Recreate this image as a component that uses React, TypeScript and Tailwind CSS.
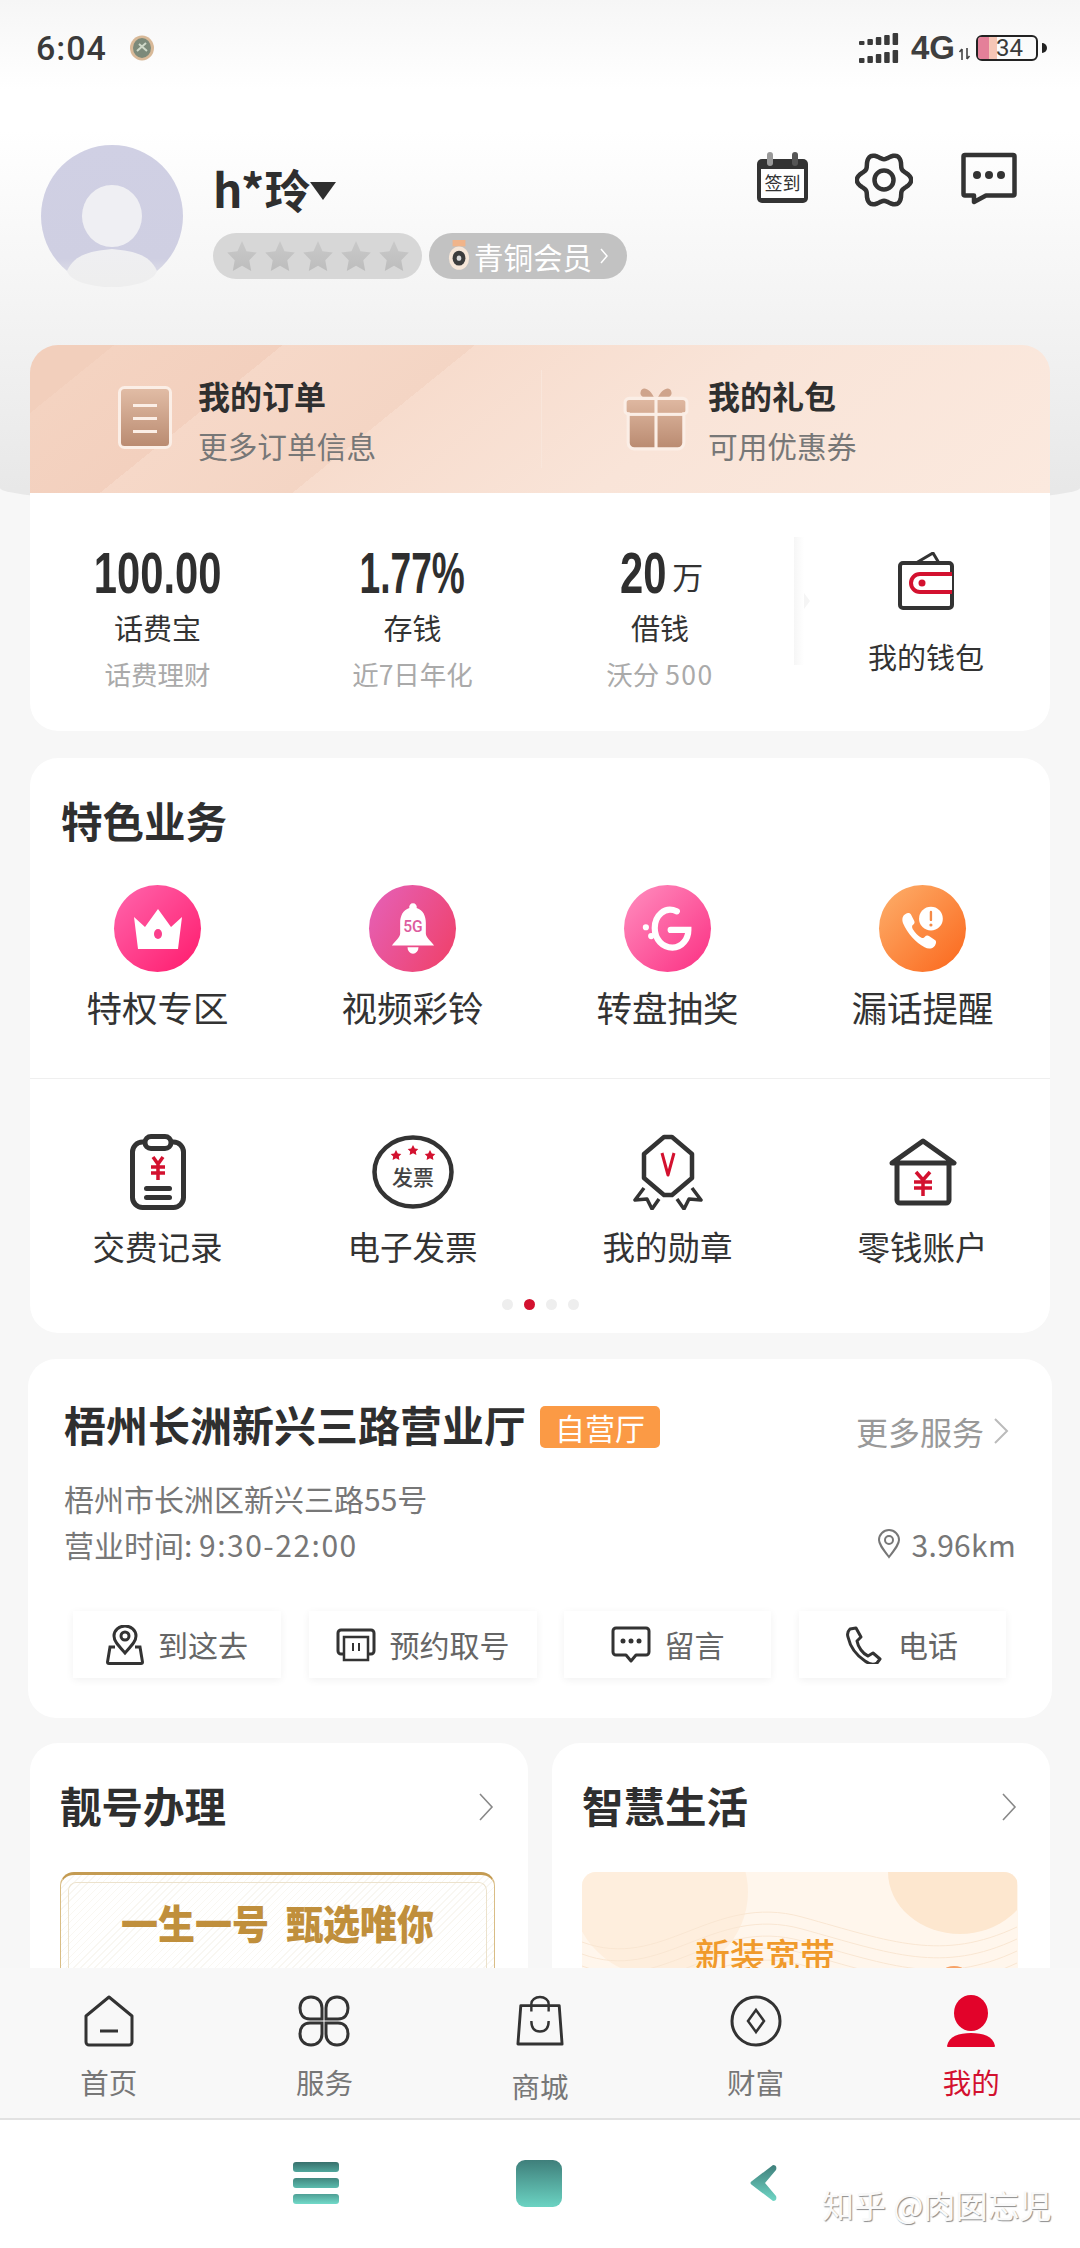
import React from "react";

const gearPath = (() => {
  const pts: string[] = [];
  for (let i = 0; i < 120; i++) {
    const t = (i / 120) * Math.PI * 2;
    const r = 24 + 3.2 * Math.cos(6 * t);
    pts.push(`${(29 + r * Math.cos(t)).toFixed(1)} ${(28 + r * Math.sin(t)).toFixed(1)}`);
  }
  return "M" + pts.join("L") + "Z";
})();

function Signal() {
  const bars = [0, 1, 2, 3, 4];
  return (
    <svg width="40" height="30" viewBox="0 0 40 30" fill="#3a3a3a">
      {bars.map((b) => (
        <g key={b}>
          <rect x={b * 8.4} y={8 - b * 2} width="5.5" height={4 + b * 2} rx="1" />
          <rect x={b * 8.4} y={25 - b * 2} width="5.5" height={5 + b * 2} rx="1" />
        </g>
      ))}
    </svg>
  );
}

function StatusBar() {
  return (
    <div className="h-[95px] pl-[36px] pr-[33px] flex items-center justify-between">
      <div className="flex items-center">
        <span className="text-[34px] leading-[40px] font-medium text-[#3a3a3a] font-['Roboto',sans-serif] tracking-[1px]">6:04</span>
        <svg className="ml-[22px]" width="26" height="26" viewBox="0 0 26 26">
          <ellipse cx="13" cy="13" rx="12" ry="12.500" fill="#d8b998" />
          <ellipse cx="13" cy="13" rx="9" ry="10" fill="#7c8a7a" />
          <path d="M8 16 L17 8 M10 9 L18 16" stroke="#cfd8c8" strokeWidth="2" />
        </svg>
      </div>
      <div className="flex items-center">
        <Signal />
        <span className="ml-[12px] text-[33px] leading-[36px] font-bold text-[#3f3f3f] font-['Liberation_Sans',sans-serif]">4G</span>
        <svg className="ml-[3px] mt-[13px]" width="13" height="14" viewBox="0 0 13 14" stroke="#444" strokeWidth="1.6" fill="none">
          <path d="M4 13V2M1.5 5L4 2M9 1v11M9 12l2.5-3" />
        </svg>
        <div className="ml-[5px] w-[62px] h-[26px] rounded-[6px] border-2 border-[#222] flex items-center">
          <div className="w-[11px] h-full rounded-l-[3px] bg-[#e48099]" />
          <div className="w-[8px] h-full bg-[#f6c6b6]" />
          <span className="ml-[-1px] text-[24px] leading-[22px] text-[#3a3a3a] font-['Roboto',sans-serif]">34</span>
        </div>
        <div className="ml-[4px] w-[5px] h-[10px] rounded-r-full bg-[#222]" />
      </div>
    </div>
  );
}

function Avatar() {
  return (
    <svg width="142" height="142" viewBox="0 0 142 142" className="shrink-0">
      <defs>
        <linearGradient id="avFade" x1="0" y1="0" x2="0" y2="1">
          <stop offset="0" stopColor="#efeff2" />
          <stop offset="1" stopColor="#eeeeee" />
        </linearGradient>
        <linearGradient id="avRing" x1="0" y1="0" x2="0" y2="1">
          <stop offset="0" stopColor="#d0d0e4" />
          <stop offset="0.8" stopColor="#cfcfe2" />
          <stop offset="1" stopColor="#e8e8ec" />
        </linearGradient>
      </defs>
      <circle cx="71" cy="71" r="71" fill="url(#avRing)" />
      <ellipse cx="71" cy="71" rx="30" ry="31" fill="#efeff3" />
      <path d="M26 126 C34 108 52 106 71 104 C90 106 108 108 116 126 C112 138 88 142 71 142 C54 142 30 138 26 126Z" fill="url(#avFade)" />
    </svg>
  );
}

function Star() {
  return (
    <svg width="30" height="30" viewBox="0 0 28 26" preserveAspectRatio="none">
      <defs>
        <linearGradient id="starG" x1="0" y1="0" x2="0" y2="1">
          <stop offset="0" stopColor="#c9c9c9" />
          <stop offset="1" stopColor="#bdbdbd" />
        </linearGradient>
      </defs>
      <path d="M14 0l4.2 8.8 9.6 1.2-7 6.6 1.8 9.4L14 21.4 5.400 26l1.800-9.400-7-6.600 9.600-1.200z" fill="url(#starG)" />
    </svg>
  );
}

function Profile() {
  return (
    <div className="pl-[41px] pr-[63px] pt-[50px] flex justify-between">
      <div className="flex">
        <Avatar />
        <div className="ml-[30px]">
          <div className="mt-[17px] h-[52px] flex items-center text-[46px] leading-[52px] font-bold text-[#2f2f2f]">
            <span>h*玲</span>
            <svg className="mt-[6px]" width="26" height="18" viewBox="0 0 26 18" fill="#2f2f2f"><path d="M0 0h26L13 18z" /></svg>
          </div>
          <div className="mt-[19px] flex gap-[7px]">
            <div className="w-[209px] h-[46px] rounded-full bg-[#d7d7d7] flex items-center justify-center gap-[8px]">
              {[0, 1, 2, 3, 4].map((s) => <Star key={s} />)}
            </div>
            <div className="w-[198px] h-[46px] rounded-full bg-[#c2c2c2] flex items-center pl-[19px]">
              <svg width="22" height="32" viewBox="0 0 24 30" preserveAspectRatio="none">
                <rect x="5" y="0" width="14" height="6" fill="#f0b48a" />
                <circle cx="12" cy="17" r="11" fill="#f6e6d8" />
                <circle cx="12" cy="17" r="7" fill="#3c3c3c" />
                <circle cx="12" cy="17" r="2.500" fill="#d9d9d9" />
              </svg>
              <span className="ml-[4px] text-[29.500px] leading-[36px] text-white">青铜会员</span>
              <svg className="ml-[8px]" width="9" height="18" viewBox="0 0 9 18" fill="none" stroke="#fff" strokeWidth="1.500"><path d="M1 2l6 7-6 7" /></svg>
            </div>
          </div>
        </div>
      </div>
      <div className="flex gap-[46px] pt-[7px] h-[70px]">
        <svg width="53" height="52" viewBox="0 0 53 52">
          <path d="M6 7h41a5 5 0 0 1 5 5v34a5 5 0 0 1-5 5H6a5 5 0 0 1-5-5V12a5 5 0 0 1 5-5z" fill="#333" />
          <rect x="5" y="17" width="43" height="29" fill="#fff" />
          <rect x="11" y="0" width="6" height="14" rx="3" fill="#999" />
          <rect x="36" y="0" width="6" height="14" rx="3" fill="#555" />
          <text x="26.500" y="38" textAnchor="middle" fontSize="18" fill="#333" fontFamily="'Noto Sans CJK SC',sans-serif">签到</text>
        </svg>
        <svg width="58" height="56" viewBox="0 0 58 56" fill="none" stroke="#333" strokeWidth="4.500">
          <path d={gearPath} strokeLinejoin="round" />
          <circle cx="29" cy="28" r="9.500" />
        </svg>
        <svg width="56" height="54" viewBox="0 0 56 54" className="ml-[2px]">
          <path d="M4 3h48a1.500 1.500 0 0 1 1.500 1.500V42a1.500 1.500 0 0 1-1.500 1.500H25L13 50v-6.500H4A1.500 1.500 0 0 1 2.500 42V4.500A1.500 1.500 0 0 1 4 3z" fill="none" stroke="#333" strokeWidth="4.500" strokeLinejoin="round" />
          <circle cx="16" cy="23" r="4" fill="#333" />
          <circle cx="28" cy="23" r="4" fill="#333" />
          <circle cx="40" cy="23" r="4" fill="#333" />
        </svg>
      </div>
    </div>
  );
}

function OrderDoc() {
  return (
    <svg width="54" height="66" viewBox="0 0 54 66" className="shrink-0">
      <defs>
        <linearGradient id="docG" x1="0" y1="0" x2="0" y2="1">
          <stop offset="0" stopColor="#e2bda6" />
          <stop offset="1" stopColor="#b98a70" />
        </linearGradient>
      </defs>
      <rect x="1.500" y="1.500" width="51" height="60" rx="5" fill="url(#docG)" stroke="#fbeee6" strokeWidth="3" />
      <rect x="15" y="18" width="24" height="3" fill="#fbeee6" />
      <rect x="15" y="31" width="24" height="3" fill="#fbeee6" />
      <rect x="15" y="44" width="24" height="3" fill="#fbeee6" />
    </svg>
  );
}

function OrderGift() {
  return (
    <svg width="66" height="68" viewBox="0 0 64 66" className="shrink-0">
      <defs>
        <linearGradient id="giftG" x1="0" y1="0" x2="0" y2="1">
          <stop offset="0" stopColor="#e0b9a2" />
          <stop offset="1" stopColor="#b98a70" />
        </linearGradient>
      </defs>
      <path d="M31 14C26 2 18 1 17 7c-1 4 4 7 14 7zM33 14C38 2 46 1 47 7c1 4-4 7-14 7z" fill="#cfa48c" />
      <path d="M6 13h52a4 4 0 0 1 4 4v8a3 3 0 0 1-3 3v28a6 6 0 0 1-6 6H11a6 6 0 0 1-6-6V28a3 3 0 0 1-3-3v-8a4 4 0 0 1 4-4z" fill="url(#giftG)" stroke="#fbeee6" strokeWidth="3" />
      <rect x="4" y="27" width="56" height="3" fill="#fbeee6" />
      <rect x="30.500" y="13" width="3" height="49" fill="#fbeee6" />
    </svg>
  );
}

function OrderHead() {
  const items = [
    { title: "我的订单", sub: "更多订单信息", icon: <OrderDoc />, w: "w-[511px] pl-[88px]", gap: "ml-[26px]" },
    { title: "我的礼包", sub: "可用优惠券", icon: <OrderGift />, w: "flex-1 pl-[81px]", gap: "ml-[19px]" },
  ];
  return (
    <div className="h-[148px] flex bg-[linear-gradient(141deg,#f2cfbc_0%,#f2cfbc_7%,#f4d3c1_7%,#f3d0be_21%,#f6d8c8_21%,#f4d5c4_37%,#f7dccd_37%,#f9e4d8_62%,#fbe9de_100%)]">
      {items.map((it, i) => (
        <div key={it.title} className={`${it.w} flex items-center ${i === 1 ? "my-[25px] border-l border-[#f9e6db]" : ""}`}>
          {it.icon}
          <div className={it.gap}>
            <div className="text-[32px] leading-[44px] font-bold text-[#2f2f2f]">{it.title}</div>
            <div className="mt-[9px] text-[29.700px] leading-[40px] text-[#777]">{it.sub}</div>
          </div>
        </div>
      ))}
    </div>
  );
}

function BigNum({ children, narrow }: { children: React.ReactNode; narrow?: boolean }) {
  return (
    <span className={`inline-block ${narrow ? "scale-x-[0.64]" : "scale-x-[0.72]"} text-[58px] leading-[56px] font-bold text-[#2f2f2f] font-['Liberation_Sans',sans-serif]`}>{children}</span>
  );
}

function Stats() {
  return (
    <div className="h-[238px] flex bg-white">
      <div className="w-[255px] pt-[52px] text-center shrink-0">
        <BigNum>100.00</BigNum>
        <div className="mt-[6px] text-[29px] leading-[40px] text-[#333]">话费宝</div>
        <div className="mt-[9px] text-[26.500px] leading-[36px] text-[#aaa]">话费理财</div>
      </div>
      <div className="w-[255px] pt-[52px] text-center shrink-0">
        <BigNum narrow>1.77%</BigNum>
        <div className="mt-[6px] text-[29px] leading-[40px] text-[#333]">存钱</div>
        <div className="mt-[9px] text-[26.500px] leading-[36px] text-[#aaa]">近7日年化</div>
      </div>
      <div className="w-[240px] pt-[52px] text-center shrink-0">
        <div className="h-[56px] flex items-center justify-center pr-[6px]">
          <BigNum>20</BigNum>
          <span className="-ml-[3px] mt-[6px] text-[31px] leading-[40px] text-[#333]">万</span>
        </div>
        <div className="mt-[6px] text-[29px] leading-[40px] text-[#333]">借钱</div>
        <div className="mt-[9px] text-[26.500px] leading-[36px] text-[#aaa]">沃分 <span className="tracking-[1.500px]">500</span></div>
      </div>
      <div className="flex-1 min-w-0">
        <div className="mt-[44px] ml-[14px] w-[10px] h-[128px] bg-[linear-gradient(90deg,#f6f6f6,#ffffff)]" />
        <div className="ml-[24px] -mt-[72px] w-[6px] h-[16px] bg-[#f5f5f5] [clip-path:polygon(0_0,100%_50%,0_100%)]" />
      </div>
      <div className="w-[256px] shrink-0 -ml-[1px] flex flex-col items-center pl-[8px]">
        <svg className="mt-[59px]" width="56" height="58" viewBox="0 0 56 58">
          <path d="M18 11L35 1l6 10" fill="none" stroke="#333" strokeWidth="3" />
          <rect x="2" y="11" width="52" height="45" rx="3" fill="#fff" stroke="#333" strokeWidth="4" />
          <path d="M54 22H22a9 9 0 0 0 0 18h32" fill="#fff" stroke="#d3112f" strokeWidth="4" />
          <circle cx="24" cy="31" r="3.500" fill="#d3112f" />
        </svg>
        <div className="mt-[25px] text-[29px] leading-[42px] text-[#333]">我的钱包</div>
      </div>
    </div>
  );
}

function CrownIcon() {
  return (
    <svg width="48" height="40" viewBox="0 0 48 40" fill="#fff">
      <path d="M0 8l11 10L24 0l13 18L48 8l-4 32H4z" />
      <ellipse cx="24" cy="25" rx="4" ry="5" fill="#fb3f8c" />
    </svg>
  );
}

function BellIcon() {
  return (
    <svg width="44" height="52" viewBox="0 0 48 56">
      <path d="M24 0a4 4 0 0 1 4 5c7 2 10 9 10 16v12c0 4 6 9 9 13H1c3-4 9-9 9-13V21c0-7 3-14 10-16a4 4 0 0 1 4-5z" fill="#fff" />
      <path d="M18 48h12a6 7 0 0 1-12 0z" fill="#fff" />
      <text x="24" y="31" textAnchor="middle" fontSize="17" fontWeight="500" fill="#dd5c9e" fontFamily="'Roboto',sans-serif">5G</text>
    </svg>
  );
}

function GIcon() {
  return (
    <svg width="52" height="46" viewBox="0 0 56 52" fill="none" stroke="#fff" strokeWidth="7" strokeLinecap="round">
      <path d="M38 6C24 0 13 11 13 25c0 13 9 22 20 22 11 0 18-10 18-20H31" />
      <circle cx="3" cy="24" r="2" fill="#fff" strokeWidth="3" />
      <circle cx="9" cy="34" r="2" fill="#fff" strokeWidth="3" />
    </svg>
  );
}

function PhoneAlert() {
  return (
    <svg width="46" height="46" viewBox="0 0 56 58">
      <path d="M6 10c3-2 6-1 7 1l4 8c1 2 0 4-2 5-1 1-1 3 0 5 3 5 7 9 11 11 2 1 3 0 4-1 2-2 4-2 6-1l7 5c2 1 2 4 0 7-3 4-8 5-13 2C19 46 8 34 3 22 1 17 2 12 6 10z" fill="#fff" />
      <circle cx="38" cy="16" r="15" fill="#fff" />
      <rect x="36.500" y="6" width="3" height="13" rx="1.500" fill="#f58a47" />
      <circle cx="38" cy="24" r="2" fill="#f58a47" />
    </svg>
  );
}

function ClipboardIcon() {
  return (
    <svg width="56" height="76" viewBox="0 0 56 76" fill="none">
      <rect x="2.500" y="8" width="51" height="65.500" rx="10" stroke="#333" strokeWidth="5" />
      <rect x="15" y="2.500" width="26" height="12" rx="6" fill="#fff" stroke="#333" strokeWidth="5" />
      <path d="M23 23l5 7 5-7M21 33h14M21 39h14M28 30v16" stroke="#d3112f" strokeWidth="3.500" />
      <rect x="14" y="52" width="28" height="5" rx="2.500" fill="#333" />
      <rect x="14" y="61" width="28" height="5" rx="2.500" fill="#333" />
    </svg>
  );
}

function InvoiceIcon() {
  return (
    <svg width="82" height="74" viewBox="0 0 82 74">
      <ellipse cx="41" cy="37" rx="38.500" ry="34.500" fill="none" stroke="#333" strokeWidth="4.500" />
      <path d="M24 14l1.800 3.400 3.500.5-2.500 2.500.6 3.600-3.400-1.700-3.400 1.700.6-3.600-2.500-2.500 3.500-.5z" fill="#d3112f" transform="translate(0 1)" />
      <path d="M41 10l1.800 3.400 3.500.5-2.500 2.500.6 3.600-3.400-1.700-3.400 1.700.6-3.600-2.500-2.500 3.500-.5z" fill="#d3112f" />
      <path d="M58 14l1.800 3.400 3.500.5-2.500 2.500.6 3.600-3.400-1.700-3.400 1.700.6-3.600-2.500-2.500 3.500-.5z" fill="#d3112f" transform="translate(0 1)" />
      <text x="41" y="50" textAnchor="middle" fontSize="21" fontWeight="500" fill="#444" fontFamily="'Noto Sans CJK SC',sans-serif">发票</text>
    </svg>
  );
}

function MedalIcon() {
  return (
    <svg width="70" height="76" viewBox="0 0 70 76" fill="none" stroke="#333" strokeWidth="4.500" strokeLinejoin="round">
      <path d="M31 3h8l20 17v24L39 61h-8L11 44V20z" />
      <path d="M29 19l6 22 6-22" stroke="#d3112f" strokeWidth="3" />
      <path d="M11 54L2 66l12-1 5 10 7-10" strokeWidth="3.500" />
      <path d="M59 54l9 12-12-1-5 10-7-10" strokeWidth="3.500" />
    </svg>
  );
}

function HouseIcon() {
  return (
    <svg width="68" height="68" viewBox="0 0 68 68" fill="none" stroke="#333" strokeWidth="5" strokeLinejoin="round" strokeLinecap="round">
      <path d="M3 25L34 3l31 22z" />
      <path d="M8 26v36a3 3 0 0 0 3 3h46a3 3 0 0 0 3-3V26" />
      <path d="M27 34l7 8 7-8M25 44h18M25 50h18M34 42v16" stroke="#d3112f" strokeWidth="3.500" strokeLinecap="butt" />
    </svg>
  );
}

function Services() {
  const top = [
    { label: "特权专区", bg: "bg-[linear-gradient(135deg,#ff66ad,#ff1a6c)]", icon: <CrownIcon /> },
    { label: "视频彩铃", bg: "bg-[linear-gradient(120deg,#e562ba,#f03f66)]", icon: <BellIcon /> },
    { label: "转盘抽奖", bg: "bg-[linear-gradient(135deg,#ff8fc0,#fb2f82)]", icon: <GIcon /> },
    { label: "漏话提醒", bg: "bg-[linear-gradient(135deg,#fdb06c,#fb661b)]", icon: <PhoneAlert /> },
  ];
  const bottom = [
    { label: "交费记录", icon: <ClipboardIcon /> },
    { label: "电子发票", icon: <InvoiceIcon /> },
    { label: "我的勋章", icon: <MedalIcon /> },
    { label: "零钱账户", icon: <HouseIcon /> },
  ];
  return (
    <div className="mt-[27px] h-[575px] rounded-[28px] bg-white pt-[34px]">
      <h2 className="pl-[31px] text-[41.500px] leading-[56px] font-bold text-[#2f2f2f]">特色业务</h2>
      <div className="mt-[37px] grid grid-cols-4">
        {top.map((s) => (
          <div key={s.label} className="flex flex-col items-center">
            <div className={`w-[87px] h-[87px] rounded-full flex items-center justify-center ${s.bg}`}>{s.icon}</div>
            <div className="mt-[13px] text-[35.500px] leading-[44px] text-[#333]">{s.label}</div>
          </div>
        ))}
      </div>
      <div className="mt-[49px] h-px bg-[#efefef]" />
      <div className="mt-[55px] grid grid-cols-4">
        {bottom.map((s) => (
          <div key={s.label} className="flex flex-col items-center">
            <div className="h-[76px] flex items-center justify-center">{s.icon}</div>
            <div className="mt-[14px] text-[32.500px] leading-[44px] text-[#333]">{s.label}</div>
          </div>
        ))}
      </div>
      <div className="mt-[31px] flex justify-center gap-[11px]">
        <div className="w-[11px] h-[11px] rounded-full bg-[#eee]" />
        <div className="w-[11px] h-[11px] rounded-full bg-[#d3112f]" />
        <div className="w-[11px] h-[11px] rounded-full bg-[#eee]" />
        <div className="w-[11px] h-[11px] rounded-full bg-[#eee]" />
      </div>
    </div>
  );
}

function Store() {
  const buttons = [
    {
      label: "到这去", w: "w-[208px]",
      icon: (
        <svg width="38" height="40" viewBox="0 0 38 40" fill="none" stroke="#333" strokeWidth="3">
          <path d="M19 28C12 20 8 16 8 11a11 10 0 0 1 22 0c0 5-4 9-11 17z" />
          <circle cx="19" cy="11" r="4" />
          <path d="M9 22H4L1.500 37a1.500 1.500 0 0 0 1.500 1.500h32a1.500 1.500 0 0 0 1.500-1.500L34 22h-5" />
        </svg>
      ),
    },
    {
      label: "预约取号", w: "w-[228px]",
      icon: (
        <svg width="40" height="34" viewBox="0 0 40 34" fill="none" stroke="#333" strokeWidth="3">
          <path d="M8 26H5a3 3 0 0 1-3-3V5a3 3 0 0 1 3-3h30a3 3 0 0 1 3 3v18a3 3 0 0 1-3 3h-3" />
          <path d="M8 9h24v23H8z" strokeWidth="2.500" />
          <path d="M17 15v8M23 15v8" strokeWidth="2" />
        </svg>
      ),
    },
    {
      label: "留言", w: "w-[207px]",
      icon: (
        <svg width="40" height="37" viewBox="0 0 40 37" fill="none" stroke="#333" strokeWidth="3" strokeLinejoin="round">
          <path d="M5 2h30a3 3 0 0 1 3 3v21a3 3 0 0 1-3 3H25l-5 6-5-6H5a3 3 0 0 1-3-3V5a3 3 0 0 1 3-3z" />
          <circle cx="12" cy="15" r="2.500" fill="#333" stroke="none" />
          <circle cx="20" cy="15" r="2.500" fill="#333" stroke="none" />
          <circle cx="28" cy="15" r="2.500" fill="#333" stroke="none" />
        </svg>
      ),
    },
    {
      label: "电话", w: "w-[207px]",
      icon: (
        <svg width="38" height="38" viewBox="0 0 38 38" fill="none" stroke="#333" strokeWidth="3" strokeLinejoin="round">
          <path d="M4 3l6-1 5 9-4 4c1 6 6 13 11 15l5-3 7 6-3 4c-3 2-8 1-12-2C10 29 4 20 2 11 1 8 2 5 4 3z" />
        </svg>
      ),
    },
  ];
  return (
    <div className="mt-[26px] -mx-[2px] h-[359px] rounded-[28px] bg-white pt-[37px] px-[36px]">
      <div className="flex items-start">
        <h2 className="text-[42px] leading-[56px] font-bold text-[#2f2f2f]">梧州长洲新兴三路营业厅</h2>
        <div className="ml-[14px] mt-[10px] w-[120px] h-[42px] rounded-[5px] bg-[#fb9a45] text-center text-[30px] leading-[42px] text-white">自营厅</div>
        <div className="ml-auto mt-[13px] flex items-center text-[32px] leading-[44px] text-[#999]">
          更多服务
          <svg className="ml-[9px] mr-[7px]" width="16" height="28" viewBox="0 0 16 28" fill="none" stroke="#bbb" strokeWidth="2"><path d="M2 2l12 12L2 26" /></svg>
        </div>
      </div>
      <div className="mt-[25px] text-[30px] leading-[40px] text-[#777]">梧州市长洲区新兴三路55号</div>
      <div className="mt-[6px] flex items-center justify-between text-[30px] leading-[40px] text-[#777]">
        <span>营业时间: <span className="tracking-[1.500px]">9:30-22:00</span></span>
        <span className="flex items-center tracking-[0.300px]">
          <svg className="mr-[11px]" width="24" height="30" viewBox="0 0 24 30" fill="none" stroke="#777" strokeWidth="2">
            <path d="M12 28C5 19 2 15 2 11a10 10 0 0 1 20 0c0 4-3 8-10 17z" />
            <circle cx="12" cy="11" r="4" />
          </svg>
          3.96km
        </span>
      </div>
      <div className="mt-[47px] ml-[9px] flex gap-[27.500px]">
        {buttons.map((b) => (
          <div key={b.label} className={`${b.w} h-[67px] bg-white shadow-[0_2px_8px_rgba(0,0,0,0.06)] flex items-center justify-center gap-[14px] text-[30px] leading-[40px] text-[#666]`}>
            {b.icon}
            <span className="-mt-[2px]">{b.label}</span>
          </div>
        ))}
      </div>
    </div>
  );
}

function CardHead({ title }: { title: string }) {
  return (
    <div className="flex items-center justify-between pr-[1px]">
      <h2 className="text-[41.500px] leading-[56px] font-bold text-[#2f2f2f] -mt-[3px]">{title}</h2>
      <svg width="15" height="28" viewBox="0 0 15 28" fill="none" stroke="#888" strokeWidth="1.600"><path d="M1 1l12 13L1 27" /></svg>
    </div>
  );
}

function BottomCards() {
  return (
    <div className="mt-[25px] flex gap-[24px]">
      <div className="w-[498px] h-[300px] rounded-t-[28px] bg-white pt-[37px] pl-[30px] pr-[33px]">
        <CardHead title="靓号办理" />
        <div className="mt-[39px] h-[130px] rounded-[14px] border-[1.500px] border-[#d9bd85] border-t-[3px] border-t-[#c49b52] p-[7px] bg-[repeating-linear-gradient(135deg,#fff_0,#fff_4px,#f9f7f2_4px,#f9f7f2_5px)]">
          <div className="h-[120px] rounded-[8px] border border-[#ece2cc] pt-[12px] text-center text-[37px] leading-[48px] font-black text-[#c08f3c] scale-y-[1.08] origin-top">
            一生一号&nbsp;&nbsp;甄选唯你
          </div>
        </div>
      </div>
      <div className="flex-1 h-[300px] rounded-t-[28px] bg-white pt-[37px] pl-[30px] pr-[32px]">
        <CardHead title="智慧生活" />
        <div className="mt-[39px] relative h-[130px] rounded-[14px] overflow-hidden bg-[#fff6ec]">
          <svg className="absolute inset-0" width="435" height="130" viewBox="0 0 435 130">
            <ellipse cx="78" cy="20" rx="88" ry="85" fill="#feeedd" />
            <ellipse cx="378" cy="0" rx="72" ry="62" fill="#fde7cf" />
            {[70, 82, 94, 106, 118].map((y) => (
              <path key={y} d={`M0 ${y}C80 ${y + 30} 130 ${y - 50} 220 ${y - 25}S360 ${y + 20} 435 ${y - 15}`} fill="none" stroke="#f9e6d2" strokeWidth="1" />
            ))}
            <circle cx="372" cy="112" r="18" fill="#f7a266" />
          </svg>
          <div className="absolute left-[113px] top-[58px] text-[35px] leading-[48px] font-medium text-[#f09a2b]">新装宽带</div>
        </div>
      </div>
    </div>
  );
}

function TabBar() {
  const tabs = [
    {
      label: "首页", cls: "mt-[15px]", icon: (
        <svg width="52" height="52" viewBox="0 0 52 52" fill="none" stroke="#333" strokeWidth="3" strokeLinejoin="round">
          <path d="M26 2l23 19v26a3 3 0 0 1-3 3H6a3 3 0 0 1-3-3V21z" />
          <path d="M17 36h18" strokeWidth="3" />
        </svg>
      ),
    },
    {
      label: "服务", cls: "mt-[15px]", icon: (
        <svg width="52" height="52" viewBox="0 0 52 52" fill="none" stroke="#333" strokeWidth="3">
          <path d="M24 24H12C5 24 2 19 2 13S6 2 13 2s11 5 11 11z" />
          <path d="M28 24h12c7 0 10-5 10-11S46 2 39 2s-11 5-11 11z" />
          <path d="M24 28H12C5 28 2 33 2 39s4 11 11 11 11-5 11-11z" />
          <path d="M28 28h12c7 0 10 5 10 11s-4 11-11 11-11-5-11-11z" />
        </svg>
      ),
    },
    {
      label: "商城", cls: "mt-[19px]", icon: (
        <svg width="48" height="52" viewBox="0 0 50 52" fill="none" stroke="#333" strokeWidth="3" strokeLinejoin="round">
          <path d="M5 10h40l3 40H2z" />
          <path d="M16 16V8a9 7 0 0 1 18 0v8" strokeWidth="2.500" />
          <path d="M16 26c0 8 4 11 9 11s9-3 9-11" strokeWidth="2.500" />
        </svg>
      ),
    },
    {
      label: "财富", cls: "mt-[15px]", icon: (
        <svg width="52" height="52" viewBox="0 0 52 52" fill="none" stroke="#333" strokeWidth="3">
          <circle cx="26" cy="26" r="24" />
          <path d="M26 15l8 11-8 11-8-11z" strokeWidth="2.500" />
        </svg>
      ),
    },
    {
      label: "我的", cls: "mt-[15px] !text-[#d3112f]", icon: (
        <svg width="50" height="52" viewBox="0 0 50 52" fill="#e2032a">
          <ellipse cx="25" cy="18" rx="17" ry="18" />
          <path d="M25 38c12 0 22 3 24 13 0 1-1 1-2 1H3c-1 0-2 0-2-1 2-10 12-13 24-13z" />
        </svg>
      ),
    },
  ];
  return (
    <div className="h-[150px] bg-[#f8f8f8] grid grid-cols-5 px-[1px]">
      {tabs.map((t) => (
        <div key={t.label} className="pt-[27px] flex flex-col items-center">
          <div className="h-[52px] flex items-center justify-center">{t.icon}</div>
          <div className={`text-[28.500px] leading-[40px] text-[#777] ${t.cls}`}>{t.label}</div>
        </div>
      ))}
    </div>
  );
}

function SystemBar() {
  return (
    <div className="relative h-[130px] bg-white border-t-2 border-[#e2e2e2] flex items-start pt-[40px]">
      <div className="ml-[293px] w-[46px] h-[42px] mt-[2px] flex flex-col justify-between">
        <div className="h-[10px] rounded-[3px] bg-[linear-gradient(#37706c,#50a79c)]" />
        <div className="h-[10px] rounded-[3px] bg-[linear-gradient(#41877f,#5cbcae)]" />
        <div className="h-[10px] rounded-[3px] bg-[linear-gradient(#4f9f95,#72dac9)]" />
      </div>
      <div className="ml-[177px] w-[46px] h-[47px] rounded-[9px] bg-[linear-gradient(#3f7f7b,#6bd3c2)]" />
      <svg className="ml-[188px] mt-[4px]" width="28" height="38" viewBox="0 0 28 38">
        <defs>
          <linearGradient id="backG" x1="0" y1="0" x2="0" y2="1">
            <stop offset="0" stopColor="#3f7f7b" />
            <stop offset="1" stopColor="#6fd6c5" />
          </linearGradient>
        </defs>
        <path d="M23 1c3 0 4 2 3 5L15 19l11 13c1 3 0 5-3 5L2 21c-2-1-2-3 0-4z" fill="url(#backG)" />
      </svg>
      <div className="absolute left-[822px] top-[62px] text-[32px] leading-[44px] whitespace-nowrap text-[#fafafa] [text-shadow:1px_1px_1px_#8c8c8c]">知乎 @肉囡忘児</div>
    </div>
  );
}

export default function App() {
  return (
    <div className="w-[1080px] h-[2248px] flex flex-col overflow-hidden bg-[#f7f7f7] font-['Noto_Sans_CJK_SC','Noto_Sans',sans-serif]">
      <div className="h-[1968px] overflow-hidden shrink-0">
        {/* Header */}
        <div className="h-[510px] rounded-bl-[540px_22px] rounded-br-[540px_22px] bg-[linear-gradient(#f6f6f6_0px,#ffffff_90px,#ffffff_130px,#e8e8e8_490px)]">
          <StatusBar />
          <Profile />
        </div>

        <div className="-mt-[165px] px-[30px]">
          <div className="rounded-[28px] overflow-hidden">
            <OrderHead />
            <Stats />
          </div>
          <Services />
          <Store />
          <BottomCards />
        </div>
      </div>
      <TabBar />
      <SystemBar />
    </div>
  );
}
